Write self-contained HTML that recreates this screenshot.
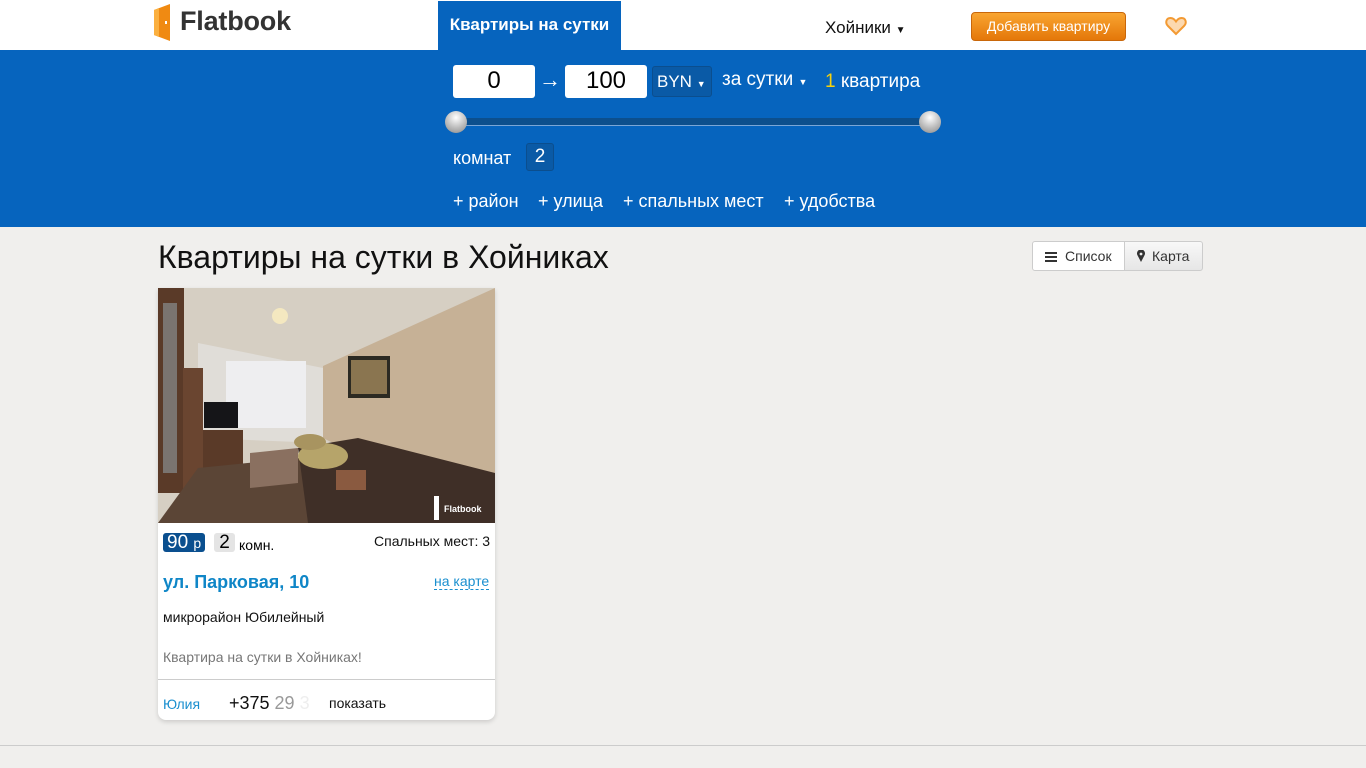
<!DOCTYPE html>
<html><head><meta charset="utf-8"><style>
*{box-sizing:border-box;margin:0;padding:0}
body{width:1366px;height:768px;overflow:hidden;background:#f0efed;font-family:"Liberation Sans",sans-serif;position:relative}
.a{position:absolute}
.top{left:0;top:0;width:1366px;height:50px;background:#fff}
.blue{left:0;top:50px;width:1366px;height:177px;background:#0664be}
.wt{color:#fff}
</style></head><body>
<div class="a top"></div>
<svg class="a" style="left:154px;top:4px" width="18" height="38"><polygon points="0,6 16,0 16,37 0,31" fill="#f08a12"/><polygon points="0,6 5,4 5,33 0,31" fill="#fbb040"/><rect x="11" y="17" width="2" height="3" fill="#fff"/></svg>
<div class="a" style="left:180px;top:6px;font-size:27px;font-weight:bold;color:#333;letter-spacing:-0.2px">Flatbook</div>
<div class="a" style="left:438px;top:1px;width:183px;height:49px;background:#0664be;color:#fff;font-weight:bold;font-size:17px;text-align:center;line-height:48px">Квартиры на сутки</div>
<div class="a" style="left:825px;top:18px;font-size:17px;color:#111">Хойники <span style="font-size:10px">▼</span></div>
<div class="a" style="left:971px;top:12px;width:155px;height:29px;border-radius:4px;background:linear-gradient(#f9a531,#e47709);border:1px solid #c9670a;color:#fff;font-size:14px;text-align:center;line-height:27px">Добавить квартиру</div>
<svg class="a" style="left:1165px;top:16px" width="22" height="20" viewBox="0 0 22 20"><path d="M11 18 L3 10 C0 7 1 2 5.5 2 C8 2 10 4 11 5.5 C12 4 14 2 16.5 2 C21 2 22 7 19 10 Z" fill="#fcd9b0" stroke="#f39a33" stroke-width="2"/></svg>
<div class="a blue"></div>
<div class="a" style="left:453px;top:65px;width:82px;height:33px;background:#fff;border-radius:3px;font-size:24px;text-align:center;line-height:32px">0</div>
<div class="a wt" style="left:539px;top:67px;font-size:22px">→</div>
<div class="a" style="left:565px;top:65px;width:82px;height:33px;background:#fff;border-radius:3px;font-size:24px;text-align:center;line-height:32px">100</div>
<div class="a wt" style="left:652px;top:66px;width:60px;height:31px;background:#0a5aa6;border:1px solid #0b4e8e;border-radius:3px;font-size:17px;line-height:29px;padding-left:4px">BYN <span style="font-size:9px">▼</span></div>
<div class="a wt" style="left:722px;top:69px;font-size:19px">за сутки <span style="font-size:9px">▼</span></div>
<div class="a wt" style="left:825px;top:71px;font-size:19px"><span style="color:#f7d10c">1</span> квартира</div>
<div class="a" style="left:456px;top:118px;width:474px;height:8px;background:#0c4f8d;border-bottom:1px solid #7aa6d6"></div>
<div class="a" style="left:445px;top:111px;width:22px;height:22px;border-radius:50%;background:radial-gradient(circle at 50% 30%,#fff,#bbb 55%,#888)"></div>
<div class="a" style="left:919px;top:111px;width:22px;height:22px;border-radius:50%;background:radial-gradient(circle at 50% 30%,#fff,#bbb 55%,#888)"></div>
<div class="a wt" style="left:453px;top:148px;font-size:18px">комнат</div>
<div class="a wt" style="left:526px;top:143px;width:28px;height:28px;background:#0a5aa6;border:1px solid #0b4e8e;border-radius:3px;font-size:19px;text-align:center;line-height:26px">2</div>
<div class="a wt" style="left:453px;top:191px;font-size:18px;white-space:nowrap"><span class="a" style="left:0">+ район</span><span class="a" style="left:85px">+ улица</span><span class="a" style="left:170px">+ спальных мест</span><span class="a" style="left:331px">+ удобства</span></div>
<div class="a" style="left:158px;top:239px;font-size:32px;color:#111">Квартиры на сутки в Хойниках</div>
<div class="a" style="left:1032px;top:241px;width:93px;height:30px;background:#fff;border:1px solid #ccc;border-radius:3px 0 0 3px;font-size:14px;color:#333;line-height:28px;padding-left:12px"><span style="display:inline-block;width:12px;height:10px;border-top:2px solid #333;border-bottom:2px solid #333;position:relative;top:1px;margin-right:8px;background:linear-gradient(transparent 2px,#333 2px,#333 4px,transparent 4px)"></span>Список</div>
<div class="a" style="left:1124px;top:241px;width:79px;height:30px;background:linear-gradient(#f8f8f8,#e6e6e6);border:1px solid #ccc;border-radius:0 3px 3px 0;font-size:14px;color:#333;line-height:28px;padding-left:12px"><svg width="8" height="12" style="margin-right:7px;vertical-align:-1px"><path d="M4 12 L0.6 5.5 A4 4 0 1 1 7.4 5.5 Z" fill="#333"/><circle cx="4" cy="4" r="1.4" fill="#eee"/></svg>Карта</div>
<div class="a" style="left:158px;top:288px;width:337px;height:432px;background:#fff;border-radius:0 0 8px 8px;box-shadow:0 2px 5px rgba(0,0,0,.15);overflow:hidden">
<svg width="337" height="235" viewBox="0 0 337 235"><rect width="337" height="235" fill="#d6cfc3"/>
<polygon points="165,78 337,0 337,235 165,150" fill="#c6b196"/>
<polygon points="40,55 165,80 165,155 40,150" fill="#e0ddd8"/>
<rect x="68" y="73" width="80" height="67" fill="#eeeef0"/>
<rect x="190" y="68" width="42" height="42" fill="#2c2a22"/><rect x="193" y="72" width="36" height="34" fill="#8a7550"/>
<rect x="0" y="0" width="26" height="205" fill="#5a3a28"/><rect x="5" y="15" width="14" height="170" fill="#7a7470"/>
<rect x="25" y="80" width="20" height="150" fill="#6a4530"/>
<rect x="46" y="114" width="34" height="26" fill="#151518"/>
<rect x="45" y="142" width="40" height="45" fill="#5a3a28"/>
<polygon points="0,235 40,180 140,170 337,200 337,235" fill="#5b4536"/>
<polygon points="92,165 140,160 140,195 92,200" fill="#8a7060"/>
<polygon points="140,160 200,150 337,185 337,235 150,235" fill="#3f2f27"/>
<ellipse cx="165" cy="168" rx="25" ry="13" fill="#b6a46a"/><ellipse cx="152" cy="154" rx="16" ry="8" fill="#a89460"/>
<rect x="178" y="182" width="30" height="20" fill="#8a5a40"/>
<circle cx="122" cy="28" r="8" fill="#f4e8c0"/>
<rect x="276" y="208" width="5" height="24" fill="#fff"/><text x="286" y="224" font-size="9" fill="#fff" font-weight="bold" font-family="Liberation Sans">Flatbook</text>
</svg>
<div class="a" style="left:5px;top:245px;height:19px;background:#0a4f8f;color:#fff;border-radius:3px;font-size:19px;line-height:19px;padding:0 4px">90 <span style="font-size:14px">р</span></div>
<div class="a" style="left:56px;top:245px;width:21px;height:19px;background:#e4e4e4;border-radius:3px;font-size:19px;line-height:19px;text-align:center">2</div>
<div class="a" style="left:81px;top:249px;font-size:14px">комн.</div>
<div class="a" style="left:216px;top:245px;font-size:14px;color:#111">Спальных мест: 3</div>
<div class="a" style="left:5px;top:284px;font-size:18px;font-weight:bold;color:#0f86c7">ул. Парковая, 10</div>
<div class="a" style="left:276px;top:285px;font-size:14px;color:#1a8fcf;border-bottom:1px dashed #1a8fcf;line-height:16px">на карте</div>
<div class="a" style="left:5px;top:321px;font-size:14px;color:#111">микрорайон Юбилейный</div>
<div class="a" style="left:5px;top:361px;font-size:14px;color:#777">Квартира на сутки в Хойниках!</div>
<div class="a" style="left:0;top:391px;width:337px;height:1px;background:#ccc"></div>
<div class="a" style="left:5px;top:408px;font-size:14px;color:#1a8fcf">Юлия</div>
<div class="a" style="left:71px;top:405px;font-size:18px;color:#111">+375 <span style="color:#999">29</span> <span style="color:#eee">3</span></div>
<div class="a" style="left:171px;top:407px;font-size:14px;color:#111">показать</div>
</div>
<div class="a" style="left:0;top:745px;width:1366px;height:1px;background:#ccc"></div>
</body></html>
